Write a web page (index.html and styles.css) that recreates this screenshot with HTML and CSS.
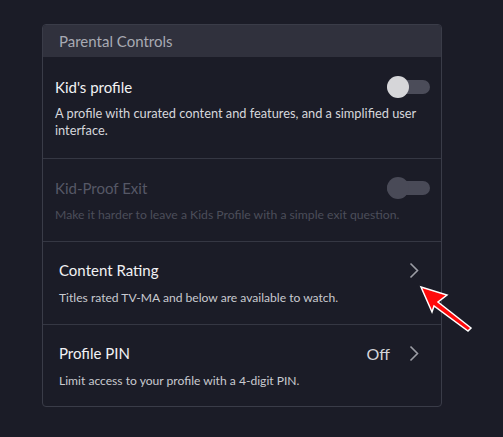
FILE: index.html
```html
<!DOCTYPE html>
<html>
<head>
<meta charset="utf-8">
<link rel="stylesheet" href="styles.css">
</head>
<body>
<section class="card">
  <header class="card-head">Parental Controls</header>
  <div class="row row-tight first">
    <div class="row-top">
      <span class="title">Kid's profile</span>
      <span class="toggle"><span class="knob"></span></span>
    </div>
    <p class="desc">A profile with curated content and features, and a simplified user interface.</p>
  </div>
  <div class="row row-tight disabled">
    <div class="row-top">
      <span class="title">Kid-Proof Exit</span>
      <span class="toggle"><span class="knob"></span></span>
    </div>
    <p class="desc">Make it harder to leave a Kids Profile with a simple exit question.</p>
  </div>
  <div class="row row-link">
    <div class="row-top">
      <span class="title">Content Rating</span>
      <span class="action">
        <svg class="chev" width="10" height="17" viewBox="0 0 10 17"><path d="M1.5 1.5 L8.5 8.5 L1.5 15.5" fill="none" stroke="currentColor" stroke-width="1.6"/></svg>
      </span>
    </div>
    <p class="desc">Titles rated TV-MA and below are available to watch.</p>
  </div>
  <div class="row row-link last">
    <div class="row-top">
      <span class="title">Profile PIN</span>
      <span class="action">
        <span class="value">Off</span>
        <svg class="chev" width="10" height="17" viewBox="0 0 10 17"><path d="M1.5 1.5 L8.5 8.5 L1.5 15.5" fill="none" stroke="currentColor" stroke-width="1.6"/></svg>
      </span>
    </div>
    <p class="desc">Limit access to your profile with a 4-digit PIN.</p>
  </div>
</section>
<svg class="pointer" width="503" height="437" viewBox="0 0 503 437">
  <polygon points="421,287 447,295 438,302 471,328 468,331 434,306 432,312" fill="#ff0a0a" stroke="#ffffff" stroke-width="1.5" stroke-linejoin="miter"/>
</svg>
</body>
</html>
```
FILE: styles.css
```css
* { box-sizing: border-box; }
html, body { margin: 0; padding: 0; }
body {
  background: #1b1c27;
  width: 503px;
  height: 437px;
  overflow: hidden;
  font-family: Lato, "Open Sans", sans-serif;
  position: relative;
  padding: 24px 0 0 42px;
}
.card {
  width: 400px;
  border: 1px solid #3a3c48;
  border-radius: 4px;
  overflow: hidden;
  background: #1b1c27;
}
.card-head {
  height: 32px;
  background: #30313d;
  color: #a8aab3;
  font-size: 15px;
  line-height: 32px;
  padding-left: 16px;
}
.row {
  border-bottom: 1px solid #353743;
  padding: 19px 11px 18px 12px;
}
.row.first { padding-top: 20px; padding-bottom: 19px; }
.row.last { border-bottom: none; padding-bottom: 17px; }
.row-link { padding-left: 16px; padding-right: 22px; padding-top: 18px; }
.row-top {
  display: flex;
  align-items: center;
  justify-content: space-between;
  height: 20px;
}
.title {
  color: #f2f2f4;
  font-size: 15px;
  line-height: 20px;
}
.desc {
  margin: 8px 0 0;
  color: #d6d7dc;
  font-size: 12.2px;
  line-height: 17px;
}
.first .desc { font-size: 12.8px; }
.row-link .desc { color: #c9cad0; margin-top: 9px; font-size: 12.1px; }
.disabled .title { color: #565866; }
.disabled .desc { color: #4c4e5a; }
.toggle {
  position: relative;
  width: 43px;
  height: 14px;
  border-radius: 7px;
  background: #4b4c59;
}
.knob {
  position: absolute;
  left: 0;
  top: -4px;
  width: 22px;
  height: 22px;
  border-radius: 50%;
  background: #d6d6d9;
}
.disabled .toggle { background: #494a57; }
.disabled .knob { background: #494a57; }
.action {
  display: flex;
  align-items: center;
  gap: 19px;
  color: #9c9da5;
}
.value {
  color: #d4d5da;
  font-size: 16px;
}
.chev { display: block; }
.pointer {
  position: absolute;
  left: 0;
  top: 0;
}
```
